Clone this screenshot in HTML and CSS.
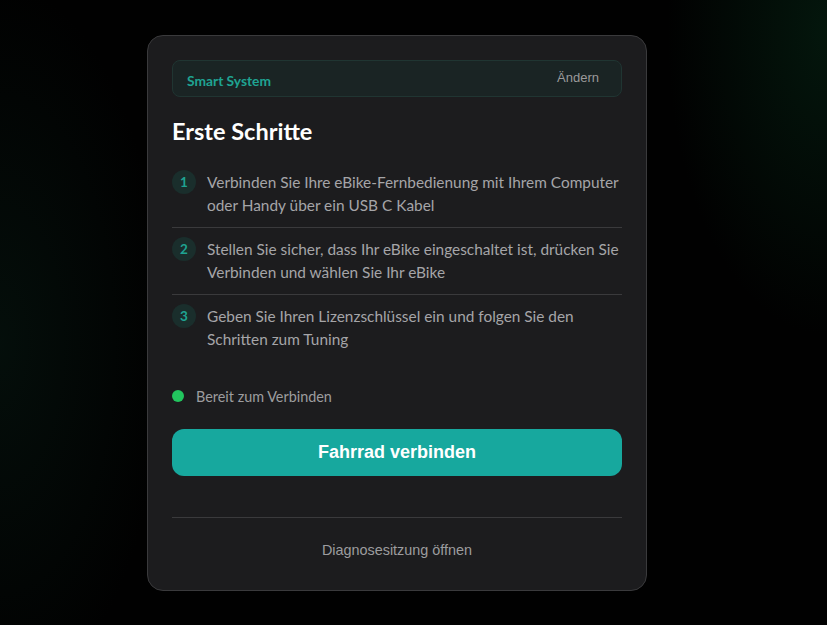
FILE: index.html
```html
<!DOCTYPE html>
<html lang="de">
<head>
<meta charset="utf-8">
<link rel="stylesheet" href="styles.css">
</head>
<body>
<main class="page">
  <section class="card">
    <div class="system">
      <span class="system-name">Smart System</span>
      <button class="system-change">Ändern</button>
    </div>
    <h1 class="title">Erste Schritte</h1>
    <ol class="steps">
      <li class="step"><span class="badge">1</span><span class="step-text">Verbinden Sie Ihre eBike-Fernbedienung mit Ihrem Computer oder Handy über ein USB C Kabel</span></li>
      <li class="step"><span class="badge">2</span><span class="step-text">Stellen Sie sicher, dass Ihr eBike eingeschaltet ist, drücken Sie Verbinden und wählen Sie Ihr eBike</span></li>
      <li class="step"><span class="badge">3</span><span class="step-text">Geben Sie Ihren Lizenzschlüssel ein und folgen Sie den Schritten zum Tuning</span></li>
    </ol>
    <div class="status"><span class="dot"></span><span class="status-text">Bereit zum Verbinden</span></div>
    <button class="connect">Fahrrad verbinden</button>
    <div class="footer"><button class="diag">Diagnosesitzung öffnen</button></div>
  </section>
</main>
</body>
</html>
```
FILE: styles.css
```css
* { box-sizing: border-box; }
html, body { margin: 0; height: 100%; }
body {
  background:
    radial-gradient(ellipse 220px 480px at 0% 55%, rgba(8, 30, 22, 0.45), rgba(0,0,0,0) 75%),
    radial-gradient(ellipse 200px 380px at 100% 5%, rgba(6, 40, 22, 0.55), rgba(0,0,0,0) 80%),
    #010101;
  font-family: Lato, "Noto Sans", sans-serif;
  color: #fff;
}
.page {
  display: flex;
  padding-top: 35px;
}
.card {
  width: 500px;
  height: 556px;
  margin-left: 147px;
  background: #1c1c1e;
  border: 1px solid #3a3a3c;
  border-radius: 16px;
  padding: 24px 24px 0;
}
.system {
  height: 37px;
  display: flex;
  align-items: center;
  justify-content: space-between;
  background: #1a2424;
  border: 1px solid #203532;
  border-radius: 8px;
  padding: 0 22px 0 14px;
}
.system-name {
  color: #1fa392;
  font-weight: 700;
  font-size: 13.8px;
  margin-top: 3px;
}
.system-change {
  background: none;
  border: 0;
  padding: 0;
  color: #9a9a9a;
  font-family: "Liberation Sans", Arial, sans-serif;
  font-size: 13px;
  margin-top: -2px;
}
.title {
  margin: 21px 0 17px;
  font-size: 23.5px;
  line-height: 26px;
  font-weight: 700;
  color: #fff;
}
.steps {
  list-style: none;
  margin: 0;
  padding: 0;
}
.step {
  display: flex;
  align-items: flex-start;
  gap: 11px;
  padding: 10px 0;
  border-bottom: 1px solid #3a3a3c;
}
.step:last-child { border-bottom: 0; }
.badge {
  flex: none;
  width: 24px;
  height: 24px;
  margin-top: -1px;
  border-radius: 50%;
  background: #1a2e2c;
  color: #1fa392;
  font-size: 13.5px;
  font-weight: 700;
  display: flex;
  align-items: center;
  justify-content: center;
}
.step-text {
  font-size: 15.4px;
  line-height: 23px;
  color: #a5a5a8;
}
.status {
  display: flex;
  align-items: center;
  gap: 12px;
  margin-top: 27px;
  height: 16px;
}
.dot {
  width: 12px;
  height: 12px;
  border-radius: 50%;
  background: #22c55e;
}
.status-text {
  font-size: 14.4px;
  color: #9c9c9f;
}
.connect {
  display: block;
  width: 100%;
  height: 47px;
  margin-top: 25px;
  border: 0;
  border-radius: 12px;
  background: #17a89e;
  color: #fff;
  font-family: "Liberation Sans", Arial, sans-serif;
  font-weight: 700;
  font-size: 18px;
}
.footer {
  margin-top: 41px;
  border-top: 1px solid #3a3a3c;
  display: flex;
  justify-content: center;
  padding-top: 24px;
}
.diag {
  background: none;
  border: 0;
  padding: 0;
  color: #9c9c9f;
  font-family: "Liberation Sans", Arial, sans-serif;
  font-size: 14.4px;
}
```
